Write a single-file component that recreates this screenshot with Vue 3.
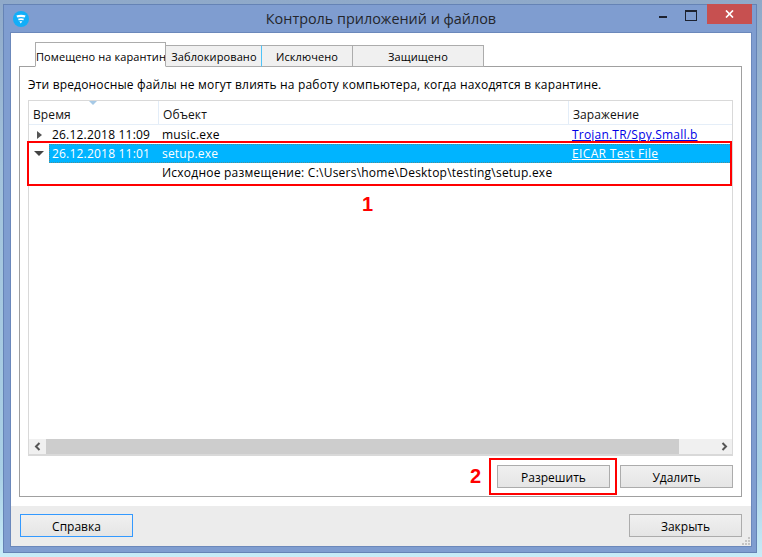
<script setup>
const tabs = [
  { label: 'Помещено на карантин', cls: 'tab-active' },
  { label: 'Заблокировано', cls: 'tab-blocked' },
  { label: 'Исключено', cls: 'tab-excluded' },
  { label: 'Защищено', cls: 'tab-protected' }
]
</script>

<template>
  <div class="desktop">
    <div class="window">
      <header class="titlebar">
        <div class="title-left">
          <svg class="logo" width="16" height="16" viewBox="0 0 16 16">
            <circle cx="8" cy="8" r="8" fill="#12aef8" />
            <path d="M3.4 4.6C6 3.3 10 3.3 12.6 4.6L11.7 6.6C9.6 5.8 6.4 5.8 4.3 6.6Z" fill="#fff" />
            <path d="M5 7.7C6.8 7 9.4 7 11 7.7L10.2 9.4C9 9 7.2 9 5.8 9.4Z" fill="#fff" />
            <path d="M6.3 10.2H9.3L7.8 12.6Z" fill="#fff" />
          </svg>
        </div>
        <div class="title">Контроль приложений и файлов</div>
        <div class="controls">
          <div class="ctl ctl-min"><span class="min-bar"></span></div>
          <div class="ctl ctl-max"><span class="max-box"></span></div>
          <div class="ctl-close">
            <svg width="9" height="8" viewBox="0 0 9 8"><path d="M1 .5L8 7.5M8 .5L1 7.5" stroke="#fff" stroke-width="1.7" fill="none" /></svg>
          </div>
        </div>
      </header>

      <div class="client">
        <main class="main">
          <div class="tabs">
            <div v-for="t in tabs" :key="t.label" class="tab" :class="t.cls">{{ t.label }}</div>
          </div>
          <section class="panel">
            <p class="intro">Эти вредоносные файлы не могут влиять на работу компьютера, когда находятся в карантине.</p>
            <div class="table">
              <div class="thead">
                <div class="th th-time">Время<span class="sort"></span></div>
                <div class="th th-obj">Объект</div>
                <div class="th th-inf">Заражение</div>
              </div>
              <div class="rows">
                <div class="row">
                  <div class="expander"><span class="arrow-right"></span></div>
                  <div class="c-time">26.12.2018 11:09</div>
                  <div class="c-obj">music.exe</div>
                  <div class="c-inf"><a class="link">Trojan.TR/Spy.Small.b</a></div>
                </div>
                <div class="row">
                  <div class="expander"><span class="arrow-down"></span></div>
                  <div class="selected">
                    <div class="c-time">26.12.2018 11:01</div>
                    <div class="c-obj">setup.exe</div>
                    <div class="c-inf"><a class="link-sel">EICAR Test File</a></div>
                  </div>
                </div>
                <div class="row row-detail">Исходное размещение: C:\Users\home\Desktop\testing\setup.exe</div>
                <div class="mark mark-1"></div>
                <div class="note note-1">1</div>
              </div>
              <div class="scrollbar">
                <div class="sb-btn">
                  <svg width="7" height="9" viewBox="0 0 7 9"><path d="M5.5 1L2 4.5L5.5 8" stroke="#555" stroke-width="2" fill="none" /></svg>
                </div>
                <div class="sb-thumb"></div>
                <div class="sb-btn sb-btn-right">
                  <svg width="7" height="9" viewBox="0 0 7 9"><path d="M1.5 1L5 4.5L1.5 8" stroke="#555" stroke-width="2" fill="none" /></svg>
                </div>
              </div>
            </div>
            <div class="actions">
              <div class="action-wrap">
                <div class="note note-2">2</div>
                <div class="mark mark-2"></div>
                <button class="btn">Разрешить</button>
              </div>
              <button class="btn">Удалить</button>
            </div>
          </section>
        </main>
        <footer class="footer">
          <button class="btn btn-focus">Справка</button>
          <button class="btn">Закрыть</button>
          <svg class="grip" width="8" height="8" viewBox="0 0 8 8">
            <g fill="#c4c4c4"><rect x="6" y="0" width="2" height="2" /><rect x="3" y="3" width="2" height="2" /><rect x="6" y="3" width="2" height="2" /><rect x="0" y="6" width="2" height="2" /><rect x="3" y="6" width="2" height="2" /><rect x="6" y="6" width="2" height="2" /></g>
          </svg>
        </footer>
      </div>
    </div>
  </div>
</template>

<style>
html, body { margin: 0; padding: 0; }
</style>

<style scoped>
.desktop {
  width: 762px;
  height: 557px;
  box-sizing: border-box;
  padding: 4px 5px 4px 3px;
  background: linear-gradient(180deg, #8fa9c9 0%, #a3c3dc 30%, #a9d0e6 85%, #c8ecf8 100%);
  overflow: hidden;
  font-family: "Open Sans", "Noto Sans", sans-serif;
  font-size: 12px;
  color: #000;
}
.window {
  height: 549px;
  box-sizing: border-box;
  display: flex;
  flex-direction: column;
  background: #7f9dd0;
  box-shadow: inset 0 0 0 1px #6583b5;
}
.titlebar {
  height: 29px;
  flex: none;
  display: grid;
  grid-template-columns: 1fr auto 1fr;
}
.title-left { padding: 7px 0 0 10px; }
.logo { display: block; }
.title {
  font-size: 14.4px;
  line-height: 30px;
  color: #24262c;
  text-align: center;
  padding-left: 2px;
}
.controls {
  display: flex;
  justify-content: flex-end;
  align-items: flex-start;
  padding-right: 5px;
}
.ctl { width: 28px; height: 20px; position: relative; display: flex; justify-content: center; }
.min-bar { width: 8px; height: 2px; background: #1d2230; margin-top: 12px; }
.ctl-max { margin-right: 2px; }
.max-box { width: 10px; height: 8px; border: 1px solid #1d2230; border-top-width: 2px; margin-top: 6px; box-sizing: content-box; }
.ctl-close {
  width: 45px;
  height: 20px;
  background: #c75050;
  display: flex;
  align-items: center;
  justify-content: center;
}
.client {
  flex: 1;
  margin: 0 6px 7px 8px;
  background: #fff;
  display: flex;
  flex-direction: column;
  min-height: 0;
  box-shadow: 0 0 0 1px #6b88bb;
}
.main {
  flex: 1;
  min-height: 0;
  padding: 10px 9px 9px 8px;
  display: flex;
  flex-direction: column;
}
.tabs {
  height: 24px;
  flex: none;
  display: flex;
  align-items: flex-end;
  padding-left: 16px;
  position: relative;
  z-index: 1;
  margin-bottom: -1px;
}
.tab {
  box-sizing: border-box;
  height: 22px;
  background: #f0f0f0;
  border: 1px solid #acacac;
  border-left: 0;
  line-height: 22px;
  text-align: center;
  white-space: nowrap;
  font-size: 11px;
  letter-spacing: 0.1px;
}
.tab-active {
  width: 131px;
  height: 25px;
  background: #fff;
  border-left: 1px solid #acacac;
  border-bottom: 1px solid #fff;
  line-height: 27px;
  overflow: hidden;
}
.tab-blocked { width: 96px; border-right: 1px solid #4fc3f7; padding-left: 1px; }
.tab-excluded { width: 91px; }
.tab-protected { width: 131px; }
.panel {
  flex: 1;
  min-height: 0;
  box-sizing: border-box;
  border: 1px solid #a0a0a0;
  padding: 0 8px 8px 8px;
  display: flex;
  flex-direction: column;
}
.intro {
  margin: 0;
  height: 33px;
  box-sizing: border-box;
  padding-top: 8px;
  line-height: 20px;
  white-space: nowrap;
  letter-spacing: 0.17px;
}
.table {
  flex: 1;
  min-height: 0;
  border: 1px solid #d9d9d9;
  border-width: 1px 1px 2px 1px;
  display: flex;
  flex-direction: column;
}
.thead {
  height: 24px;
  flex: none;
  display: flex;
  border-bottom: 1px solid #e5eef8;
  box-sizing: border-box;
}
.th {
  box-sizing: border-box;
  line-height: 27px;
  padding-left: 4px;
  position: relative;
  color: #111;
  letter-spacing: 0.1px;
}
.th-time { width: 130px; border-right: 1px solid #e3edf8; }
.th-obj { width: 410px; border-right: 1px solid #e3edf8; }
.th-inf { flex: 1; }
.sort {
  position: absolute;
  left: 60px;
  top: 0;
  width: 0;
  height: 0;
  border-left: 4px solid transparent;
  border-right: 4px solid transparent;
  border-top: 4px solid #a6c9e6;
}
.rows { flex: 1; min-height: 0; position: relative; }
.row {
  height: 19px;
  display: flex;
  line-height: 19px;
  white-space: nowrap;
  letter-spacing: 0.2px;
}
.expander {
  width: 20px;
  flex: none;
  display: flex;
  align-items: center;
  justify-content: center;
}
.arrow-right {
  width: 0;
  height: 0;
  border-top: 4px solid transparent;
  border-bottom: 4px solid transparent;
  border-left: 5px solid #555;
}
.arrow-down {
  width: 0;
  height: 0;
  border-left: 5px solid transparent;
  border-right: 5px solid transparent;
  border-top: 5px solid #444;
}
.c-time { width: 109px; padding-left: 3px; box-sizing: border-box; flex: none; }
.c-obj { width: 410px; flex: none; box-sizing: border-box; padding-left: 4px; }
.c-inf { flex: 1; padding-left: 4px; }
.link { color: #0000e6; text-decoration: underline; }
.link-sel { color: #fff; text-decoration: underline; letter-spacing: 0.35px; }
.selected {
  flex: 1;
  display: flex;
  background: #00b4ff;
  color: #fff;
  outline: 1px dotted rgba(150, 110, 60, 0.55);
  outline-offset: -1px;
}
.row-detail { padding-left: 133px; letter-spacing: 0.23px; }
.mark {
  position: absolute;
  box-sizing: border-box;
  border: 2px solid #f00;
  pointer-events: none;
}
.mark-1 { left: -2px; top: 16px; width: 705px; height: 45px; }
.note {
  position: absolute;
  color: #f00;
  font-family: "Liberation Sans", sans-serif;
  font-weight: 700;
  font-size: 20px;
  line-height: 20px;
}
.note-1 { left: 333px; top: 69px; }
.scrollbar {
  height: 15px;
  flex: none;
  display: flex;
  background: #f0f0f0;
}
.sb-btn {
  width: 17px;
  flex: none;
  display: flex;
  align-items: center;
  justify-content: center;
}
.sb-btn-right { width: 53px; justify-content: flex-end; padding-right: 4px; box-sizing: border-box; }
.sb-thumb { flex: 1; background: #cdcdcd; }
.actions {
  height: 32px;
  flex: none;
  display: flex;
  justify-content: flex-end;
  align-items: flex-end;
  gap: 10px;
}
.action-wrap { position: relative; display: flex; }
.mark-2 { left: -8px; top: -7px; width: 128px; height: 37px; }
.note-2 { left: -27px; top: 1px; }
.btn {
  width: 113px;
  height: 23px;
  box-sizing: border-box;
  border: 1px solid #acacac;
  background: linear-gradient(180deg, #f0f0f0, #e5e5e5);
  font: inherit;
  color: #000;
  padding: 2px 0 0;
  line-height: 18px;
  display: block;
}
.btn-focus { border: 1px solid #3399ff; }
.footer {
  height: 40px;
  flex: none;
  box-sizing: border-box;
  background: #ececec;
  display: flex;
  justify-content: space-between;
  padding: 8px 9px 0 9px;
  position: relative;
}
.grip { position: absolute; right: 1px; bottom: 1px; }
</style>
